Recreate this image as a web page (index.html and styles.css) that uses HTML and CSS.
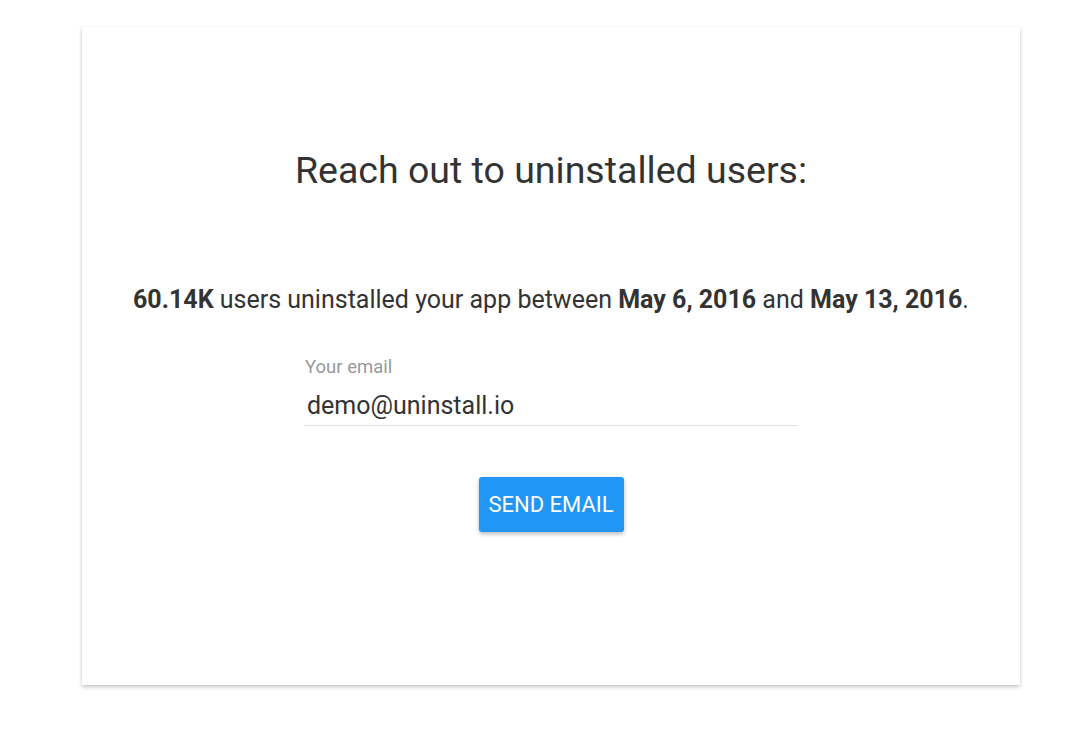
FILE: index.html
```html
<!DOCTYPE html>
<html lang="en">
<head>
    <meta charset="UTF-8">
    <title>Uninstall</title>
    <link rel="stylesheet" href="styles.css">
</head>
<body>
<div id="home">
    <div class="card">
        <div class="title">Reach out to uninstalled users:</div>
        <div class="summary">
            <b>60.14K</b> users uninstalled your app between <b>May 6, 2016</b> and <b>May 13, 2016</b>.
        </div>
        <div class="field">
            <label for="email">Your email</label>
            <input id="email" type="text" value="demo@uninstall.io">
        </div>
        <button class="send">SEND EMAIL</button>
    </div>
</div>
</body>
</html>
```

FILE: styles.css
```css
* {
    padding: 0;
    margin: 0;
    box-sizing: border-box;
}

body, html {
    width: 100%;
    height: 100%;
    background: #FFFFFF;
    font-family: Roboto, "Noto Sans", sans-serif;
}

#home {
    padding: 27px 66px 0 82px;
}

.card {
    height: 658px;
    background: #FFFFFF;
    box-shadow: 0 2px 4px 0 rgba(0, 0, 0, 0.22), 0 0 2px 0 rgba(0, 0, 0, 0.06);
    display: flex;
    flex-direction: column;
    align-items: center;
    padding-top: 119px;
}

.title {
    font-size: 37.5px;
    line-height: 48px;
    color: #333333;
}

.summary {
    margin-top: 89px;
    font-size: 25px;
    line-height: 34px;
    color: #333333;
}

.summary b {
    font-weight: 700;
}

.field {
    width: 494px;
    margin-top: 38px;
    display: flex;
    flex-direction: column;
}

.field label {
    font-size: 18.5px;
    line-height: 24px;
    color: #999999;
    padding-left: 1px;
}

.field input {
    height: 47px;
    border: none;
    border-bottom: 1px solid #E0E0E0;
    font-family: Roboto, "Noto Sans", sans-serif;
    font-size: 25px;
    color: #333333;
    padding: 6px 3px 0;
    outline: none;
    background: transparent;
}

.send {
    margin-top: 51px;
    width: 145px;
    height: 55px;
    background: #2196F3;
    border: none;
    border-radius: 3px;
    box-shadow: 0 2px 4px 0 rgba(0, 0, 0, 0.28);
    color: #FFFFFF;
    font-family: Roboto, "Noto Sans", sans-serif;
    font-size: 22px;
    cursor: pointer;
}
```
